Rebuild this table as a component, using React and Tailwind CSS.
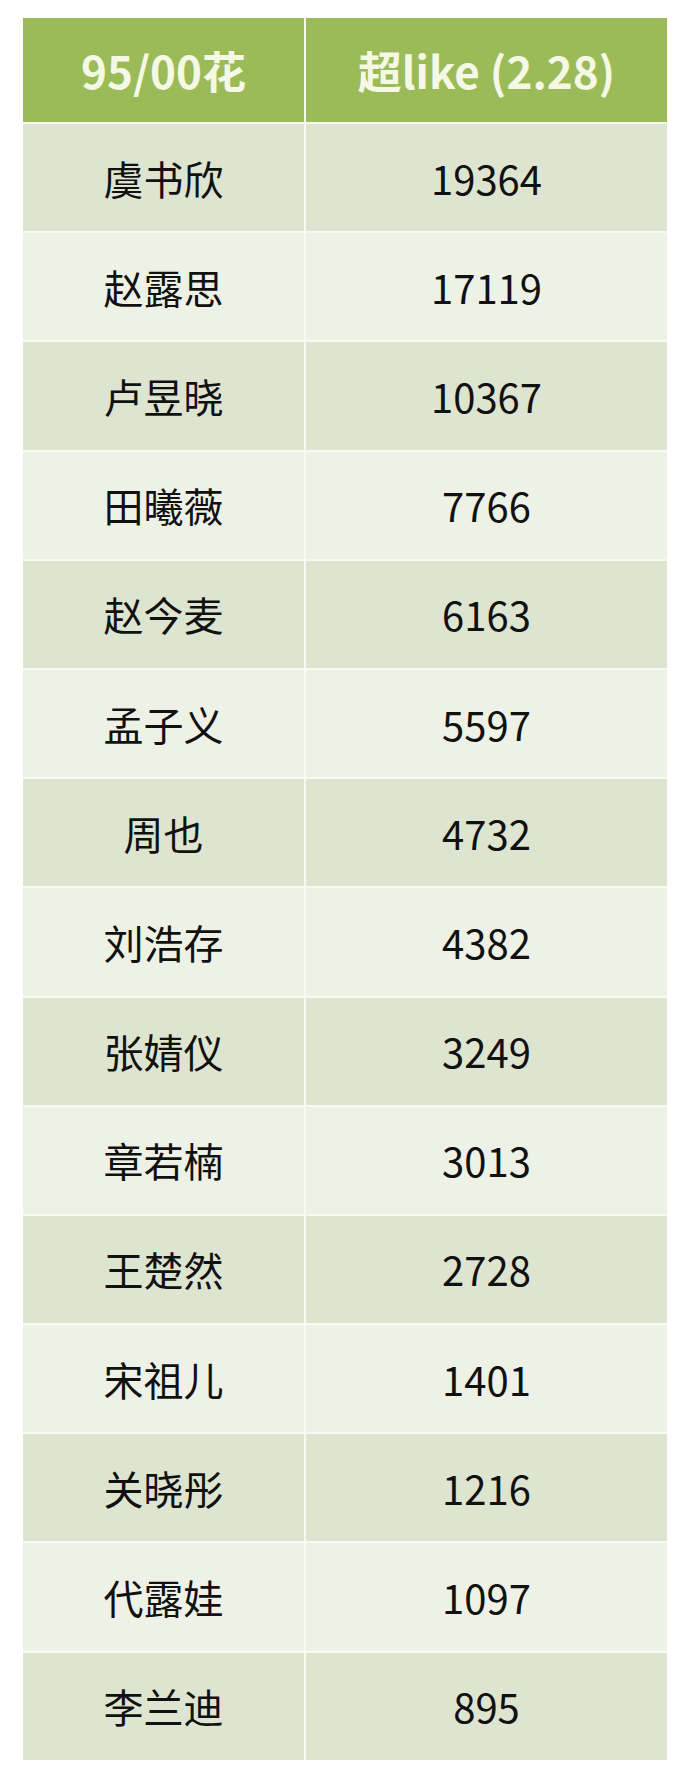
import React from 'react'

const rows = [
  ['虞书欣', '19364'],
  ['赵露思', '17119'],
  ['卢昱晓', '10367'],
  ['田曦薇', '7766'],
  ['赵今麦', '6163'],
  ['孟子义', '5597'],
  ['周也', '4732'],
  ['刘浩存', '4382'],
  ['张婧仪', '3249'],
  ['章若楠', '3013'],
  ['王楚然', '2728'],
  ['宋祖儿', '1401'],
  ['关晓彤', '1216'],
  ['代露娃', '1097'],
  ['李兰迪', '895'],
]

const App = () => {
  return (
    <div
      className="w-[690px] h-[1784px] bg-white pt-[18px] pl-[23px]"
      style={{ fontFamily: '"Noto Sans CJK SC", "Noto Sans", sans-serif' }}
    >
      <div className="w-[644px] grid grid-cols-[281px_1fr] gap-x-[2px] gap-y-[2px] bg-[#f7faf0]">
        {/* Header */}
        <div className="h-[104px] bg-[#9bbb59] flex items-center justify-center text-[44px] font-bold text-[#f4f8e4]">
          95/00花
        </div>
        <div className="h-[104px] bg-[#9bbb59] flex items-center justify-center text-[44px] font-bold text-[#f4f8e4]">
          超like (2.28)
        </div>

        {/* Rows */}
        {rows.map(([name, value], index) => {
          const bg = index % 2 === 0 ? 'bg-[#dde4cf]' : 'bg-[#edf1e6]'
          return (
            <React.Fragment key={name}>
              <div className={`h-[107.2px] ${bg} flex items-center justify-center text-[40px] text-[#111111]`}>
                {name}
              </div>
              <div className={`h-[107.2px] ${bg} flex items-center justify-center text-[40px] text-[#111111]`}>
                {value}
              </div>
            </React.Fragment>
          )
        })}
      </div>
    </div>
  )
}

export default App
